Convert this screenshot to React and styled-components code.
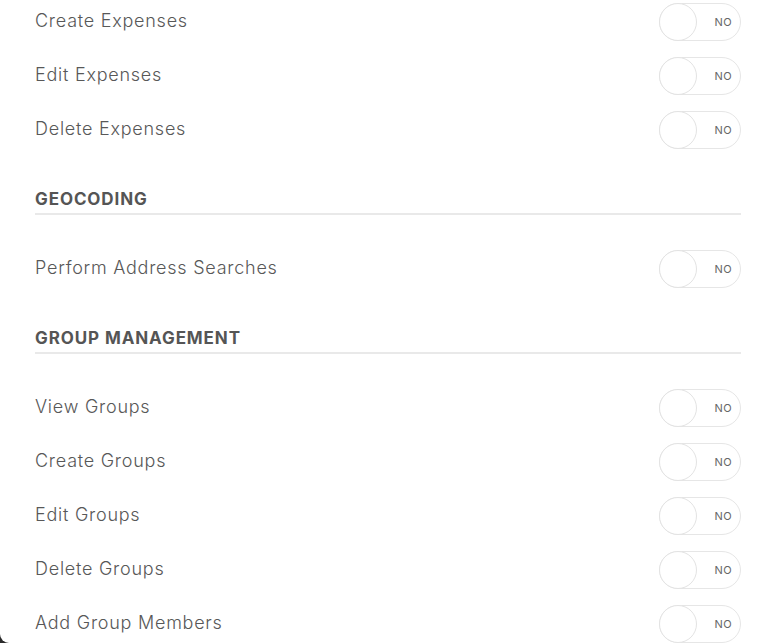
import React from "react"
import styled, { createGlobalStyle } from "styled-components"

const GlobalStyle = createGlobalStyle`
  html, body {
    margin: 0;
    padding: 0;
    background: #2b2b2b;
    overflow: hidden;
  }
`

const Panel = styled.div`
  background: #ffffff;
  height: 100vh;
  overflow: hidden;
  border-bottom-left-radius: 9px;
  padding: 0 37px 0 35px;
  box-sizing: border-box;
  font-family: "Inter", "Liberation Sans", sans-serif;
  color: #555555;
`

const List = styled.div`
  margin-top: -5px;
`

const Row = styled.div`
  height: 54px;
  display: flex;
  align-items: center;
  justify-content: space-between;
`

const Label = styled.span`
  font-size: 18px;
  font-weight: 300;
  letter-spacing: 0.75px;
  line-height: 24px;
  padding-bottom: 2px;
  color: #585858;
`

const SectionTitle = styled.div`
  margin-top: 30px;
  margin-bottom: 27px;
  line-height: 24px;
  padding-bottom: 2px;
  border-bottom: 2px solid #e9e9e9;
  font-size: 17px;
  font-weight: 700;
  letter-spacing: 0.9px;
  color: #555555;
`

const Switch = styled.div`
  position: relative;
  width: 82px;
  height: 38px;
  box-sizing: border-box;
  border: 1px solid #e6e6e6;
  border-radius: 19px;
  background: #ffffff;
  display: flex;
  align-items: center;
  justify-content: flex-end;
  padding-right: 8px;
`

const Knob = styled.span`
  position: absolute;
  left: -1px;
  top: -1px;
  width: 38px;
  height: 38px;
  box-sizing: border-box;
  border-radius: 50%;
  border: 1px solid #e3e3e3;
  background: #ffffff;
`

const SwitchText = styled.span`
  font-size: 11px;
  font-weight: 400;
  letter-spacing: 0.4px;
  color: #666666;
`

const sections = [
  { title: null, items: ["Create Expenses", "Edit Expenses", "Delete Expenses"] },
  { title: "GEOCODING", items: ["Perform Address Searches"] },
  {
    title: "GROUP MANAGEMENT",
    items: ["View Groups", "Create Groups", "Edit Groups", "Delete Groups", "Add Group Members"],
  },
]

const Toggle = () => (
  <Switch>
    <Knob />
    <SwitchText>NO</SwitchText>
  </Switch>
)

const App = () => {
  return (
    <>
      <GlobalStyle />
      <Panel>
        <List>
          {sections.map((section, i) => (
            <div key={i}>
              {section.title && <SectionTitle>{section.title}</SectionTitle>}
              {section.items.map(item => (
                <Row key={item}>
                  <Label>{item}</Label>
                  <Toggle />
                </Row>
              ))}
            </div>
          ))}
        </List>
      </Panel>
    </>
  )
}

export default App
